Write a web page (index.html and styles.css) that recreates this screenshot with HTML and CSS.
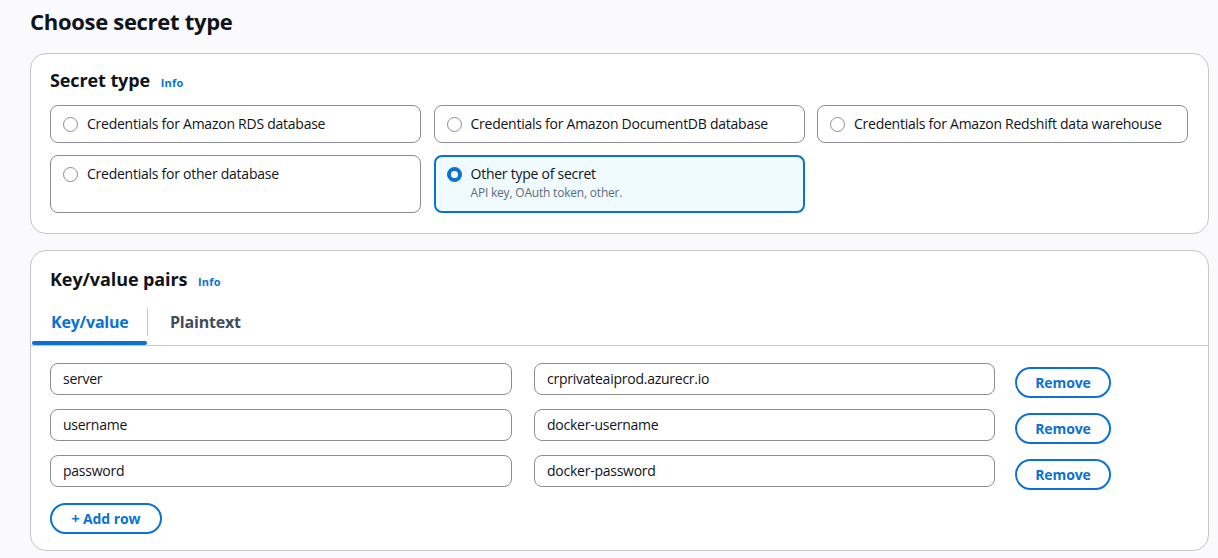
FILE: index.html
```html
<!DOCTYPE html>
<html>
<head>
<meta charset="utf-8">
<link rel="stylesheet" href="styles.css">
</head>
<body>
<div class="page">
  <h1 class="page-title">Choose secret type</h1>

  <section class="container">
    <h2 class="section-title">Secret type <a class="info">Info</a></h2>
    <div class="tiles">
      <label class="tile"><span class="radio"></span><span class="tile-text"><span class="tile-label">Credentials for Amazon RDS database</span></span></label>
      <label class="tile"><span class="radio"></span><span class="tile-text"><span class="tile-label">Credentials for Amazon DocumentDB database</span></span></label>
      <label class="tile"><span class="radio"></span><span class="tile-text"><span class="tile-label">Credentials for Amazon Redshift data warehouse</span></span></label>
      <label class="tile"><span class="radio"></span><span class="tile-text"><span class="tile-label">Credentials for other database</span></span></label>
      <label class="tile selected"><span class="radio checked"></span><span class="tile-text"><span class="tile-label">Other type of secret</span><span class="tile-desc">API key, OAuth token, other.</span></span></label>
    </div>
  </section>

  <section class="container kv">
    <h2 class="section-title">Key/value pairs <a class="info">Info</a></h2>
    <div class="tabs">
      <div class="tab active">Key/value</div>
      <div class="tab-sep"></div>
      <div class="tab">Plaintext</div>
    </div>
    <div class="rows">
      <div class="row">
        <div class="input key">server</div>
        <div class="input value">crprivateaiprod.azurecr.io</div>
        <button class="btn remove">Remove</button>
      </div>
      <div class="row">
        <div class="input key">username</div>
        <div class="input value">docker-username</div>
        <button class="btn remove">Remove</button>
      </div>
      <div class="row">
        <div class="input key">password</div>
        <div class="input value">docker-password</div>
        <button class="btn remove">Remove</button>
      </div>
      <div class="add-row">
        <button class="btn add">+ Add row</button>
      </div>
    </div>
  </section>
</div>
</body>
</html>
```

FILE: styles.css
```css
* { box-sizing: border-box; }
html, body { margin: 0; padding: 0; }
body {
  background: #fafafc;
  font-family: "Open Sans", "Noto Sans", sans-serif;
  color: #0f141a;
  width: 1218px;
  height: 558px;
  overflow: hidden;
}
.page {
  padding: 7px 9px 0 30px;
}
.page-title {
  margin: 0;
  font-size: 22px;
  line-height: 28px;
  font-weight: 700;
  letter-spacing: -0.3px;
  color: #0f141a;
}
.container {
  margin-top: 18px;
  background: #ffffff;
  border: 1px solid #c6c6cd;
  border-radius: 16px;
  padding: 14px 19px 20px 19px;
}
.section-title {
  margin: 0;
  font-size: 18px;
  line-height: 24px;
  font-weight: 700;
  color: #0f141a;
  letter-spacing: -0.1px;
}
.info {
  font-size: 11px;
  font-weight: 700;
  color: #0972d3;
  margin-left: 6px;
  letter-spacing: 0.2px;
}
.tiles {
  margin-top: 10px;
  display: grid;
  grid-template-columns: repeat(3, 371px);
  column-gap: 12.5px;
  row-gap: 12px;
}
.tile {
  display: flex;
  align-items: flex-start;
  border: 1px solid #8c8c94;
  border-radius: 8px;
  padding: 8px 12px 8px 12px;
  min-height: 37px;
}
.tile.selected {
  border: 2px solid #0972d3;
  background: #f0fbff;
  padding: 7px 11px 10px 11px;
}
.radio {
  flex: none;
  width: 15px;
  height: 15px;
  border-radius: 50%;
  border: 1px solid #8c8c94;
  margin-top: 3px;
  margin-right: 9px;
  background: #fff;
}
.radio.checked {
  border: 4.5px solid #0972d3;
  background: #fff;
}
.tile-text {
  display: flex;
  flex-direction: column;
}
.tile-label {
  font-size: 14px;
  line-height: 20px;
  color: #0f141a;
  letter-spacing: -0.25px;
}
.tile-desc {
  font-size: 12px;
  line-height: 16px;
  color: #5f6b7a;
  margin-top: 1px;
  letter-spacing: -0.2px;
}
.kv {
  margin-top: 16px;
  padding: 16px 0 16px 0;
}
.kv .section-title {
  padding-left: 19px;
}
.tabs {
  display: flex;
  align-items: center;
  height: 47px;
  margin-top: 5px;
  border-bottom: 1px solid #c6c6cd;
  padding-left: 1px;
}
.tab {
  height: 100%;
  display: flex;
  align-items: center;
  font-size: 16px;
  font-weight: 700;
  color: #414d5c;
  position: relative;
  letter-spacing: -0.2px;
}
.tab.active {
  color: #0972d3;
  width: 115px;
  padding-left: 19px;
}
.tab.active::after {
  content: "";
  position: absolute;
  left: 0;
  right: 0;
  bottom: 0;
  height: 4px;
  border-radius: 2px;
  background: #0972d3;
}
.tab-sep {
  width: 1px;
  height: 28px;
  background: #c6c6cd;
  margin-right: 22px;
}
.rows {
  padding: 17px 19px 0 19px;
}
.row {
  display: flex;
  align-items: flex-start;
  margin-bottom: 11px;
}
.input {
  height: 32px;
  border: 1px solid #8c8c94;
  border-radius: 8px;
  padding: 0 12px;
  font-size: 14px;
  line-height: 30px;
  color: #0f141a;
  background: #fff;
  letter-spacing: -0.25px;
}
.input.key { width: 462px; }
.input.value { width: 461px; margin-left: 22px; }
.btn {
  font-family: "Open Sans", "Noto Sans", sans-serif;
  font-size: 14px;
  font-weight: 700;
  color: #0972d3;
  background: #fff;
  border: 2px solid #0972d3;
  border-radius: 20px;
  height: 31px;
  padding: 0 18px;
  line-height: 27px;
  letter-spacing: -0.1px;
}
.btn.remove {
  margin-left: 20px;
  margin-top: 4px;
  width: 96px;
}
.add-row {
  padding-top: 2px;
}
.btn.add {
  width: 112px;
}
```
